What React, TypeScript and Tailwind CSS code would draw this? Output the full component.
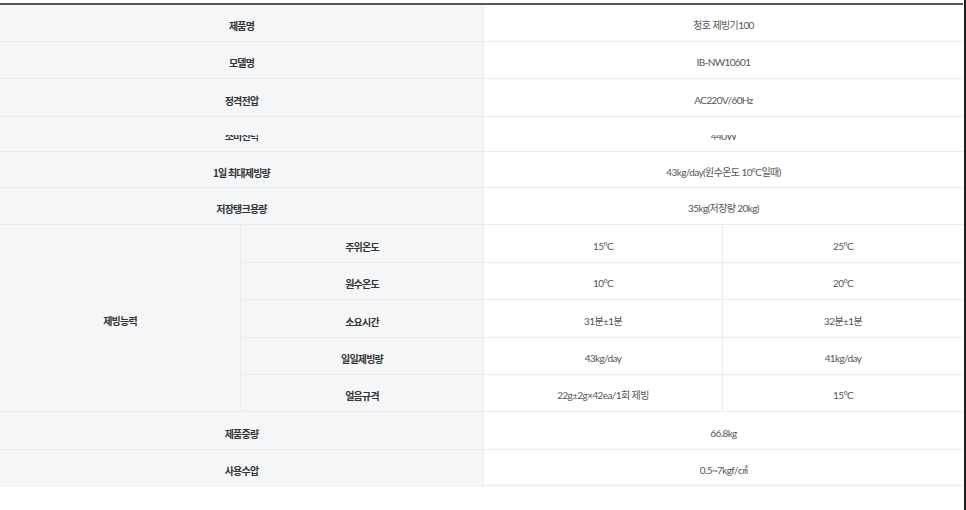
const labelFont = "font-['Noto_Sans_CJK_KR','Noto_Sans',sans-serif]";
const valueFont = "font-['Lato','Noto_Sans_CJK_KR',sans-serif]";

type SimpleRow = { label: string; value: string; h: string; clipped?: boolean };

const topRows: SimpleRow[] = [
  { label: "제품명", value: "청호 제빙기100", h: "h-[37px]" },
  { label: "모델명", value: "IB-NW10601", h: "h-[37px]" },
  { label: "정격전압", value: "AC220V/60Hz", h: "h-[38px]" },
  { label: "소비전력", value: "440W", h: "h-[35px]", clipped: true },
  { label: "1일 최대제빙량", value: "43kg/day(원수온도 10°C일때)", h: "h-[36px]" },
  { label: "저장탱크용량", value: "35kg(저장량 20kg)", h: "h-[37px]" },
];

const abilityRows = [
  { label: "주위온도", a: "15°C", b: "25°C", h: "h-[38px]" },
  { label: "원수온도", a: "10°C", b: "20°C", h: "h-[37px]" },
  { label: "소요시간", a: "31분±1분", b: "32분±1분", h: "h-[38px]" },
  { label: "일일제빙량", a: "43kg/day", b: "41kg/day", h: "h-[37px]" },
  { label: "얼음규격", a: "22g±2g×42ea/1회 제빙", b: "15°C", h: "h-[37px]" },
];

const bottomRows: SimpleRow[] = [
  { label: "제품중량", value: "66.8kg", h: "h-[38px]" },
  { label: "사용수압", value: "0.5~7kgf/㎠", h: "h-[36px]" },
];

function Clip({ text }: { text: string }) {
  // the row in the original capture only shows the lower half of the glyphs
  return (
    <span className="mt-[3px] inline-block h-[7px] overflow-hidden leading-[14px]">
      <span className="-mt-[6px] block">{text}</span>
    </span>
  );
}

function Label({ text, clipped, className = "" }: { text: string; clipped?: boolean; className?: string }) {
  return (
    <div
      className={`flex items-center justify-center border-b border-[#e9ebee] bg-[#f5f6f8] pt-[5px] text-[10px] font-bold tracking-[-0.8px] text-[#333] ${labelFont} ${className}`}
    >
      {clipped ? <Clip text={text} /> : text}
    </div>
  );
}

function Value({ text, clipped, className = "" }: { text: string; clipped?: boolean; className?: string }) {
  return (
    <div
      className={`flex items-center justify-center border-b border-l border-[#e9ebee] bg-white pt-[5px] text-[10px] tracking-[-0.6px] text-[#555] ${valueFont} ${className}`}
    >
      {clipped ? <Clip text={text} /> : text}
    </div>
  );
}

export default function App() {
  return (
    <div className="flex h-[510px] w-[966px] bg-white">
      <div className="w-[963px] pt-[3px]">
        <div className="grid grid-cols-[240px_243px_239px_1fr] border-t-2 border-[#555]">
          {topRows.map((r) => (
            <div key={r.label} className="contents">
              <Label text={r.label} clipped={r.clipped} className={`col-span-2 ${r.h}`} />
              <Value text={r.value} clipped={r.clipped} className={`col-span-2 ${r.h}`} />
            </div>
          ))}

          <Label text="제빙능력" className="row-span-5" />
          {abilityRows.map((r) => (
            <div key={r.label} className="contents">
              <Label text={r.label} className={`col-start-2 border-l ${r.h}`} />
              <Value text={r.a} className={r.h} />
              <Value text={r.b} className={r.h} />
            </div>
          ))}

          {bottomRows.map((r) => (
            <div key={r.label} className="contents">
              <Label text={r.label} className={`col-span-2 ${r.h}`} />
              <Value text={r.value} className={`col-span-2 ${r.h}`} />
            </div>
          ))}
        </div>
      </div>
      <div className="ml-[1px] h-full w-[2px] bg-[#1e1e1e]" />
    </div>
  );
}
